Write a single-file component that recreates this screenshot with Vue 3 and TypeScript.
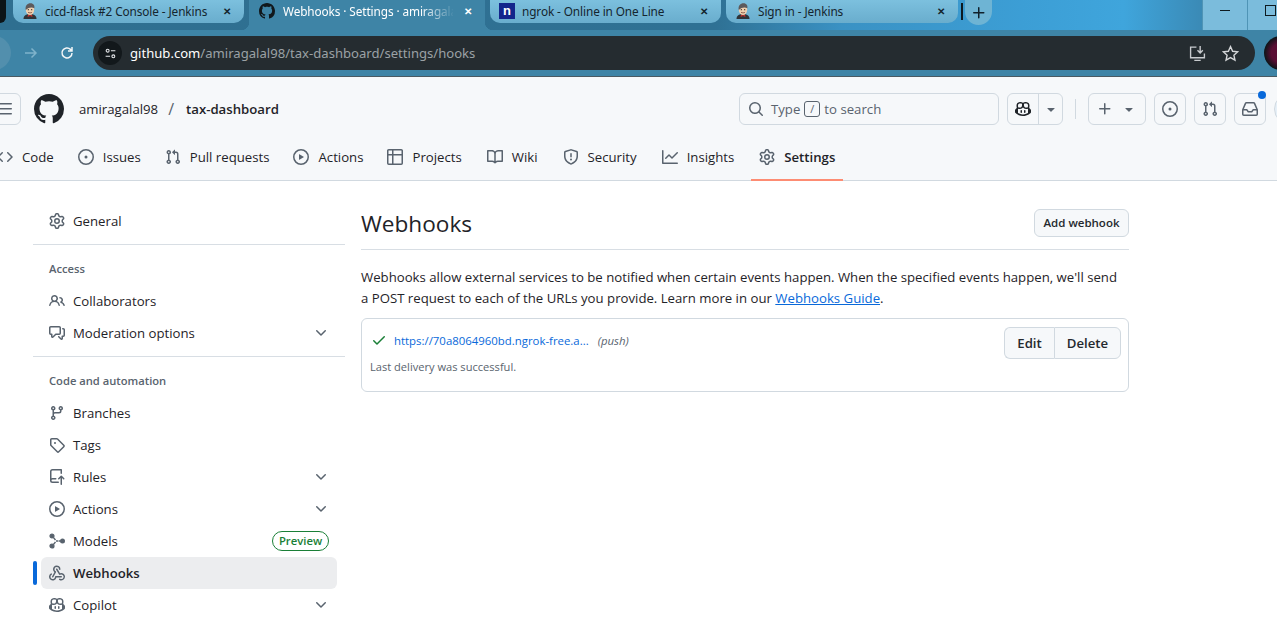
<script setup lang="ts">
const icons: Record<string, string[]> = {
  gear: ['M8 0a8.2 8.2 0 0 1 .701.031C9.444.095 9.99.645 10.16 1.29l.288 1.107c.018.066.079.158.212.224.231.114.454.243.668.386.123.082.233.09.299.071l1.103-.303c.644-.176 1.392.021 1.82.63.27.385.506.792.704 1.218.315.675.111 1.422-.364 1.891l-.814.806c-.049.048-.098.147-.088.294.016.257.016.515 0 .772-.01.147.038.246.088.294l.814.806c.475.469.679 1.216.364 1.891a7.977 7.977 0 0 1-.704 1.217c-.428.61-1.176.807-1.82.63l-1.102-.302c-.067-.019-.177-.011-.3.071a5.909 5.909 0 0 1-.668.386c-.133.066-.194.158-.211.224l-.29 1.106c-.168.646-.715 1.196-1.458 1.26a8.006 8.006 0 0 1-1.402 0c-.743-.064-1.289-.614-1.458-1.26l-.289-1.106c-.018-.066-.079-.158-.212-.224a5.738 5.738 0 0 1-.668-.386c-.123-.082-.233-.09-.299-.071l-1.103.303c-.644.176-1.392-.021-1.82-.63a8.12 8.12 0 0 1-.704-1.218c-.315-.675-.111-1.422.363-1.891l.815-.806c.05-.048.098-.147.088-.294a6.214 6.214 0 0 1 0-.772c.01-.147-.038-.246-.088-.294l-.815-.806C.635 6.045.431 5.298.746 4.623a7.92 7.92 0 0 1 .704-1.217c.428-.61 1.176-.807 1.82-.63l1.102.302c.067.019.177.011.3-.071.214-.143.437-.272.668-.386.133-.066.194-.158.211-.224l.29-1.106C6.009.645 6.556.095 7.299.03 7.53.01 7.764 0 8 0Zm-.571 1.525c-.036.003-.108.036-.137.146l-.289 1.105c-.147.561-.549.967-.998 1.189-.173.086-.34.183-.5.29-.417.278-.97.423-1.529.27l-1.103-.303c-.109-.03-.175.016-.195.045-.22.312-.412.644-.573.99-.014.031-.021.11.059.19l.815.806c.411.406.562.957.53 1.456a4.709 4.709 0 0 0 0 .582c.032.499-.119 1.05-.53 1.456l-.815.806c-.081.08-.073.159-.059.19.162.346.353.677.573.989.02.03.085.076.195.046l1.102-.303c.56-.153 1.113-.008 1.53.27.161.107.328.204.501.29.447.222.85.629.997 1.189l.289 1.105c.029.109.101.143.137.146a6.6 6.6 0 0 0 1.142 0c.036-.003.108-.036.137-.146l.289-1.105c.147-.561.549-.967.998-1.189.173-.086.34-.183.5-.29.417-.278.97-.423 1.529-.27l1.103.303c.109.029.175-.016.195-.045.22-.313.411-.644.573-.99.014-.031.021-.11-.059-.19l-.815-.806c-.411-.406-.562-.957-.53-1.456a4.709 4.709 0 0 0 0-.582c-.032-.499.119-1.05.53-1.456l.815-.806c.081-.08.073-.159.059-.19a6.464 6.464 0 0 0-.573-.989c-.02-.03-.085-.076-.195-.046l-1.102.303c-.56.153-1.113.008-1.53-.27a4.44 4.44 0 0 0-.501-.29c-.447-.222-.85-.629-.997-1.189l-.289-1.105c-.029-.11-.101-.143-.137-.146a6.6 6.6 0 0 0-1.142 0ZM11 8a3 3 0 1 1-6 0 3 3 0 0 1 6 0ZM9.5 8a1.5 1.5 0 1 0-3.001.001A1.5 1.5 0 0 0 9.5 8Z'],
  github: ['M8 0c4.42 0 8 3.58 8 8a8.013 8.013 0 0 1-5.45 7.59c-.4.08-.55-.17-.55-.38 0-.27.01-1.13.01-2.2 0-.75-.25-1.23-.54-1.48 1.78-.2 3.65-.88 3.65-3.95 0-.88-.31-1.59-.82-2.15.08-.2.36-1.02-.08-2.12 0 0-.67-.22-2.2.82-.64-.18-1.32-.27-2-.27-.68 0-1.36.09-2 .27-1.53-1.03-2.2-.82-2.2-.82-.44 1.1-.16 1.92-.08 2.12-.51.56-.82 1.28-.82 2.15 0 3.06 1.86 3.75 3.64 3.95-.23.2-.44.55-.51 1.07-.46.21-1.61.55-2.33-.66-.15-.24-.6-.83-1.23-.82-.67.01-.27.38.01.53.34.19.73.9.82 1.13.16.45.68 1.31 2.69.94 0 .67.01 1.3.01 1.49 0 .21-.15.45-.55.38A7.995 7.995 0 0 1 0 8c0-4.42 3.58-8 8-8Z'],
  code: ['m11.28 3.22 4.25 4.25a.75.75 0 0 1 0 1.06l-4.25 4.25a.749.749 0 0 1-1.275-.326.749.749 0 0 1 .215-.734L13.94 8l-3.72-3.72a.749.749 0 0 1 .326-1.275.749.749 0 0 1 .734.215Zm-6.56 0a.751.751 0 0 1 1.042.018.751.751 0 0 1 .018 1.042L2.06 8l3.72 3.72a.749.749 0 0 1-.326 1.275.749.749 0 0 1-.734-.215L.47 8.53a.75.75 0 0 1 0-1.06Z'],
  issue: ['M8 9.5a1.5 1.5 0 1 0 0-3 1.5 1.5 0 0 0 0 3Z', 'M8 0a8 8 0 1 1 0 16A8 8 0 0 1 8 0ZM1.5 8a6.5 6.5 0 1 0 13 0 6.5 6.5 0 0 0-13 0Z'],
  pr: ['M1.5 3.25a2.25 2.25 0 1 1 3 2.122v5.256a2.251 2.251 0 1 1-1.5 0V5.372A2.25 2.25 0 0 1 1.5 3.25Zm5.677-.177L9.573.677A.25.25 0 0 1 10 .854V2.5h1A2.5 2.5 0 0 1 13.5 5v5.628a2.251 2.251 0 1 1-1.5 0V5a1 1 0 0 0-1-1h-1v1.646a.25.25 0 0 1-.427.177L7.177 3.427a.25.25 0 0 1 0-.354ZM3.75 2.5a.75.75 0 1 0 0 1.5.75.75 0 0 0 0-1.5Zm0 9.5a.75.75 0 1 0 0 1.5.75.75 0 0 0 0-1.5Zm8.25.75a.75.75 0 1 0 1.5 0 .75.75 0 0 0-1.5 0Z'],
  play: ['M8 0a8 8 0 1 1 0 16A8 8 0 0 1 8 0ZM1.5 8a6.5 6.5 0 1 0 13 0 6.5 6.5 0 0 0-13 0Zm4.879-2.773 4.264 2.559a.25.25 0 0 1 0 .428l-4.264 2.559A.25.25 0 0 1 6 10.559V5.442a.25.25 0 0 1 .379-.215Z'],
  table: ['M0 1.75C0 .784.784 0 1.75 0h12.5C15.216 0 16 .784 16 1.75v12.5A1.75 1.75 0 0 1 14.25 16H1.75A1.75 1.75 0 0 1 0 14.25ZM6.5 6.5v8h7.75a.25.25 0 0 0 .25-.25V6.5Zm8-1.5V1.75a.25.25 0 0 0-.25-.25H6.5V5Zm-13 1.5v7.75c0 .138.112.25.25.25H5v-8ZM5 5V1.5H1.75a.25.25 0 0 0-.25.25V5Z'],
  book: ['M0 1.75A.75.75 0 0 1 .75 1h4.253c1.227 0 2.317.59 3 1.501A3.743 3.743 0 0 1 11.006 1h4.245a.75.75 0 0 1 .75.75v10.5a.75.75 0 0 1-.75.75h-4.507a2.25 2.25 0 0 0-1.591.659l-.622.621a.75.75 0 0 1-1.06 0l-.622-.621A2.25 2.25 0 0 0 5.258 13H.75a.75.75 0 0 1-.75-.75Zm7.251 10.324.004-5.073-.002-2.253A2.25 2.25 0 0 0 5.003 2.5H1.5v9h3.757a3.75 3.75 0 0 1 1.994.574ZM8.755 4.75l-.004 7.322a3.752 3.752 0 0 1 1.992-.572H14.5v-9h-3.495a2.25 2.25 0 0 0-2.25 2.25Z'],
  shield: ['M7.467.133a1.748 1.748 0 0 1 1.066 0l5.25 1.68A1.75 1.75 0 0 1 15 3.48V7c0 1.566-.32 3.182-1.303 4.682-.983 1.498-2.585 2.813-5.032 3.855a1.697 1.697 0 0 1-1.33 0c-2.447-1.042-4.049-2.357-5.032-3.855C1.32 10.182 1 8.566 1 7V3.48a1.75 1.75 0 0 1 1.217-1.667Zm.61 1.429a.25.25 0 0 0-.153 0l-5.25 1.68a.25.25 0 0 0-.174.238V7c0 1.358.275 2.666 1.057 3.86.784 1.194 2.121 2.34 4.366 3.297a.196.196 0 0 0 .154 0c2.245-.956 3.582-2.104 4.366-3.298C13.225 9.666 13.5 8.36 13.5 7V3.48a.251.251 0 0 0-.174-.237l-5.25-1.68ZM8.75 4.75v3a.75.75 0 0 1-1.5 0v-3a.75.75 0 0 1 1.5 0ZM9 10.5a1 1 0 1 1-2 0 1 1 0 0 1 2 0Z'],
  graph: ['M1.5 1.75V13.5h13.75a.75.75 0 0 1 0 1.5H.75a.75.75 0 0 1-.75-.75V1.75a.75.75 0 0 1 1.5 0Zm14.28 2.53-5.25 5.25a.75.75 0 0 1-1.06 0L7 7.06 4.28 9.78a.751.751 0 0 1-1.042-.018.751.751 0 0 1-.018-1.042l3.25-3.25a.75.75 0 0 1 1.06 0L10 7.94l4.72-4.72a.751.751 0 0 1 1.042.018.751.751 0 0 1 .018 1.042Z'],
  search: ['M10.68 11.74a6 6 0 0 1-7.922-8.982 6 6 0 0 1 8.982 7.922l3.04 3.04a.749.749 0 0 1-.326 1.275.749.749 0 0 1-.734-.215ZM11.5 7a4.499 4.499 0 1 0-8.997 0A4.499 4.499 0 0 0 11.5 7Z'],
  bars: ['M1 2.75A.75.75 0 0 1 1.75 2h12.5a.75.75 0 0 1 0 1.5H1.75A.75.75 0 0 1 1 2.75Zm0 5A.75.75 0 0 1 1.75 7h12.5a.75.75 0 0 1 0 1.5H1.75A.75.75 0 0 1 1 7.75ZM1.75 12h12.5a.75.75 0 0 1 0 1.5H1.75a.75.75 0 0 1 0-1.5Z'],
  copilot: ['M7.998 15.035c-4.562 0-7.873-2.914-7.998-3.749V9.338c.085-.628.677-1.686 1.588-2.065.013-.07.024-.143.036-.218.029-.183.06-.384.126-.612-.201-.508-.254-1.084-.254-1.656 0-.87.128-1.769.693-2.484.579-.733 1.494-1.124 2.724-1.261 1.206-.134 2.262.034 2.944.765.05.053.096.108.139.165.044-.057.094-.112.143-.165.682-.731 1.738-.899 2.944-.765 1.23.137 2.145.528 2.724 1.261.566.715.693 1.614.693 2.484 0 .572-.053 1.148-.254 1.656.066.228.098.429.126.612.012.076.024.148.037.218.924.385 1.522 1.471 1.591 2.095v1.872c0 .766-3.351 3.795-8.002 3.795Zm0-1.485c2.28 0 4.584-1.11 5.002-1.433V7.862l-.023-.116c-.49.21-1.075.291-1.727.291-1.146 0-2.059-.327-2.71-.991A3.222 3.222 0 0 1 8 6.303a3.24 3.24 0 0 1-.544.743c-.65.664-1.563.991-2.71.991-.652 0-1.236-.081-1.727-.291l-.023.116v4.255c.419.323 2.722 1.433 5.002 1.433ZM6.762 2.83c-.193-.206-.637-.413-1.682-.297-1.019.113-1.479.404-1.713.7-.247.312-.369.789-.369 1.554 0 .793.129 1.171.308 1.371.162.181.519.379 1.442.379.853 0 1.339-.235 1.638-.54.315-.322.527-.827.617-1.553.117-.935-.037-1.395-.241-1.614Zm4.155-.297c-1.044-.116-1.488.091-1.681.297-.204.219-.359.679-.242 1.614.091.726.303 1.231.618 1.553.299.305.784.54 1.638.54.922 0 1.28-.198 1.442-.379.179-.2.308-.578.308-1.371 0-.765-.123-1.242-.37-1.554-.233-.296-.693-.587-1.713-.7Z', 'M6.25 9.037a.75.75 0 0 1 .75.75v1.501a.75.75 0 0 1-1.5 0V9.787a.75.75 0 0 1 .75-.75Zm4.25.75v1.501a.75.75 0 0 1-1.5 0V9.787a.75.75 0 0 1 1.5 0Z'],
  plus: ['M7.75 2a.75.75 0 0 1 .75.75V7h4.25a.75.75 0 0 1 0 1.5H8.5v4.25a.75.75 0 0 1-1.5 0V8.5H2.75a.75.75 0 0 1 0-1.5H7V2.75A.75.75 0 0 1 7.75 2Z'],
  caret: ['m4.427 7.427 3.396 3.396a.25.25 0 0 0 .354 0l3.396-3.396A.25.25 0 0 0 11.396 7H4.604a.25.25 0 0 0-.177.427Z'],
  inbox: ['M2.8 2.06A1.75 1.75 0 0 1 4.41 1h7.18c.7 0 1.333.417 1.61 1.06l2.74 6.395c.04.093.06.194.06.295v4.5A1.75 1.75 0 0 1 14.25 15H1.75A1.75 1.75 0 0 1 0 13.25v-4.5c0-.101.02-.202.06-.295Zm1.61.44a.25.25 0 0 0-.23.152L1.887 8H4.75a.75.75 0 0 1 .6.3L6.625 10h2.75l1.275-1.7a.75.75 0 0 1 .6-.3h2.863L11.82 2.652a.25.25 0 0 0-.23-.152Zm10.09 7h-2.875l-1.275 1.7a.75.75 0 0 1-.6.3h-3.5a.75.75 0 0 1-.6-.3L4.375 9.5H1.5v3.75c0 .138.112.25.25.25h12.5a.25.25 0 0 0 .25-.25Z'],
  people: ['M2 5.5a3.5 3.5 0 1 1 5.898 2.549 5.508 5.508 0 0 1 3.034 4.084.75.75 0 1 1-1.482.235 4 4 0 0 0-7.9 0 .75.75 0 0 1-1.482-.236A5.507 5.507 0 0 1 3.102 8.05 3.493 3.493 0 0 1 2 5.5ZM11 4a3.001 3.001 0 0 1 2.22 5.018 5.01 5.01 0 0 1 2.56 3.012.749.749 0 0 1-.885.954.752.752 0 0 1-.549-.514 3.507 3.507 0 0 0-2.522-2.372.75.75 0 0 1-.574-.73v-.352a.75.75 0 0 1 .416-.672A1.5 1.5 0 0 0 11 5.5.75.75 0 0 1 11 4Zm-5.5-.5a2 2 0 1 0-.001 3.999A2 2 0 0 0 5.5 3.5Z'],
  discussion: ['M1.75 1h8.5c.966 0 1.75.784 1.75 1.75v5.5A1.75 1.75 0 0 1 10.25 10H7.061l-2.574 2.573A1.458 1.458 0 0 1 2 11.543V10h-.25A1.75 1.75 0 0 1 0 8.25v-5.5C0 1.784.784 1 1.75 1ZM1.5 2.75v5.5c0 .138.112.25.25.25h1a.75.75 0 0 1 .75.75v2.19l2.72-2.72a.749.749 0 0 1 .53-.22h3.5a.25.25 0 0 0 .25-.25v-5.5a.25.25 0 0 0-.25-.25h-8.5a.25.25 0 0 0-.25.25Zm13 2a.25.25 0 0 0-.25-.25h-.5a.75.75 0 0 1 0-1.5h.5c.966 0 1.75.784 1.75 1.75v5.5A1.75 1.75 0 0 1 14.25 12H14v1.543a1.458 1.458 0 0 1-2.487 1.03L9.22 12.28a.749.749 0 0 1 .326-1.275.749.749 0 0 1 .734.215l2.22 2.22v-2.19a.75.75 0 0 1 .75-.75h1a.25.25 0 0 0 .25-.25Z'],
  branch: ['M9.5 3.25a2.25 2.25 0 1 1 3 2.122V6A2.5 2.5 0 0 1 10 8.5H6a1 1 0 0 0-1 1v1.128a2.251 2.251 0 1 1-1.5 0V5.372a2.25 2.25 0 1 1 1.5 0v1.836A2.493 2.493 0 0 1 6 7h4a1 1 0 0 0 1-1v-.628A2.25 2.25 0 0 1 9.5 3.25Zm-6 0a.75.75 0 1 0 1.5 0 .75.75 0 0 0-1.5 0Zm8.25-.75a.75.75 0 1 0 0 1.5.75.75 0 0 0 0-1.5ZM4.25 12a.75.75 0 1 0 0 1.5.75.75 0 0 0 0-1.5Z'],
  tag: ['M1 7.775V2.75C1 1.784 1.784 1 2.75 1h5.025c.464 0 .91.184 1.238.513l6.25 6.25a1.75 1.75 0 0 1 0 2.474l-5.026 5.026a1.75 1.75 0 0 1-2.474 0l-6.25-6.25A1.75 1.75 0 0 1 1 7.775Zm1.5 0c0 .066.026.13.073.177l6.25 6.25a.25.25 0 0 0 .354 0l5.025-5.025a.25.25 0 0 0 0-.354l-6.25-6.25a.25.25 0 0 0-.177-.073H2.75a.25.25 0 0 0-.25.25ZM6 5a1 1 0 1 1 0 2 1 1 0 0 1 0-2Z'],
  rules: ['M1 2.5A2.5 2.5 0 0 1 3.5 0h8.75a.75.75 0 0 1 .75.75v3.5a.75.75 0 0 1-1.5 0V1.5h-8a1 1 0 0 0-1 1v6.708A2.493 2.493 0 0 1 3.5 9h3.25a.75.75 0 0 1 0 1.5H3.5a1 1 0 0 0 0 2h5.75a.75.75 0 0 1 0 1.5H3.5A2.5 2.5 0 0 1 1 11.5Zm13.23 7.79h-.001l-1.224-1.224v6.184a.75.75 0 0 1-1.5 0V9.066L10.28 10.29a.75.75 0 0 1-1.06-1.061l2.505-2.504a.75.75 0 0 1 1.06 0L15.29 9.23a.751.751 0 0 1-.018 1.042.751.751 0 0 1-1.042.018Z'],
  webhook: ['M5.5 4.25a2.25 2.25 0 0 1 4.5 0 .75.75 0 0 0 1.5 0 3.75 3.75 0 1 0-6.14 2.889l-2.272 4.258a.75.75 0 0 0 1.324.706L7 7.25a.75.75 0 0 0-.309-1.015A2.25 2.25 0 0 1 5.5 4.25Z', 'M7.364 3.607a.75.75 0 0 1 1.03.257l2.608 4.349a3.75 3.75 0 1 1-.628 6.785.75.75 0 0 1 .752-1.299 2.25 2.25 0 1 0-.033-3.88.75.75 0 0 1-1.03-.256L7.107 4.636a.75.75 0 0 1 .257-1.03Z', 'M2.9 8.776A.75.75 0 0 1 2.625 9.8 2.25 2.25 0 1 0 6 11.75a.75.75 0 0 1 .75-.751h5.5a.75.75 0 0 1 0 1.5H7.425a3.751 3.751 0 1 1-5.55-3.998.75.75 0 0 1 1.024.274Z'],
  check: ['M13.78 4.22a.75.75 0 0 1 0 1.06l-7.25 7.25a.75.75 0 0 1-1.06 0L2.22 9.28a.751.751 0 0 1 .018-1.042.751.751 0 0 1 1.042-.018L6 10.94l6.72-6.72a.75.75 0 0 1 1.06 0Z'],
  chevron: ['M12.78 5.22a.749.749 0 0 1 0 1.06l-4.25 4.25a.749.749 0 0 1-1.06 0L3.22 6.28a.749.749 0 1 1 1.06-1.06L8 8.939l3.72-3.719a.749.749 0 0 1 1.06 0Z'],
}

const tabs = [
  { title: 'cicd-flask #2 Console - Jenkins', fav: 'jenkins', w: 231 },
  { title: 'Webhooks · Settings · amiragala', fav: 'github', w: 236, active: true },
  { title: 'ngrok - Online in One Line', fav: 'ngrok', w: 231 },
  { title: 'Sign in - Jenkins', fav: 'jenkins', w: 232 },
]

const repoNav = [
  { label: 'Code', icon: 'code' },
  { label: 'Issues', icon: 'issue' },
  { label: 'Pull requests', icon: 'pr' },
  { label: 'Actions', icon: 'play' },
  { label: 'Projects', icon: 'table' },
  { label: 'Wiki', icon: 'book' },
  { label: 'Security', icon: 'shield' },
  { label: 'Insights', icon: 'graph' },
  { label: 'Settings', icon: 'gear', active: true },
]

const accessItems = [
  { label: 'Collaborators', icon: 'people' },
  { label: 'Moderation options', icon: 'discussion', more: true },
]

const codeItems = [
  { label: 'Branches', icon: 'branch' },
  { label: 'Tags', icon: 'tag' },
  { label: 'Rules', icon: 'rules', more: true },
  { label: 'Actions', icon: 'play', more: true },
  { label: 'Models', icon: 'models', preview: true },
  { label: 'Webhooks', icon: 'webhook', active: true },
  { label: 'Copilot', icon: 'copilot', more: true },
]
</script>

<template>
  <div class="window">
    <div class="tabstrip">
      <span class="edge"></span>
      <div
        v-for="tab in tabs"
        :key="tab.title"
        :class="['tab', { active: tab.active }]"
        :style="{ width: tab.w + 'px' }"
      >
        <svg v-if="tab.fav === 'jenkins'" class="fav" viewBox="0 0 16 16">
          <path d="M1.500 16c0-3.500 2.500-5 6.500-5s6.500 1.500 6.500 5Z" fill="#2f3438" />
          <path d="M6 11.500 8 12.500 10 11.500 10.500 14 8 13 5.500 14Z" fill="#c4302b" />
          <ellipse cx="8" cy="6.500" rx="4.200" ry="5.500" fill="#eecfae" />
          <path d="M3.700 7C3 2.500 5.500.3 8.500.3s4.500 2.500 3.800 5C10.500 3.800 6.500 4 3.700 7Z" fill="#5c5a5c" />
          <path d="M6 9.300c1.200.8 3 .7 4 0" stroke="#7a4a3a" stroke-width=".8" fill="none" />
          <circle cx="6.300" cy="6.700" r=".6" fill="#222" />
          <circle cx="9.700" cy="6.700" r=".6" fill="#222" />
        </svg>
        <svg v-else-if="tab.fav === 'github'" class="fav" viewBox="0 0 16 16">
          <path v-for="d in icons.github" :key="d" :d="d" fill="#11181c" />
        </svg>
        <span v-else class="fav ngrok">n</span>
        <span class="tab-title">{{ tab.title }}</span>
        <span class="tab-close">✕</span>
      </div>
      <span class="tab-sep"></span>
      <span class="new-tab">
        <svg viewBox="0 0 16 16"><path v-for="d in icons.plus" :key="d" :d="d" /></svg>
      </span>
      <div class="win-btns">
        <span class="win-btn"><i class="min"></i></span>
        <span class="win-btn"><i class="max"></i></span>
      </div>
    </div>

    <div class="toolbar">
      <span class="back"></span>
      <svg class="tb-icon forward" viewBox="0 0 16 16">
        <path d="M2 8h11M8.500 3.500 13 8l-4.500 4.500" fill="none" stroke="#7fb3cb" stroke-width="1.500" />
      </svg>
      <svg class="tb-icon reload" viewBox="0 0 16 16">
        <path d="M13 8a5 5 0 1 1-1.500-3.600L13 6M13 2v4H9" fill="none" stroke="#f3f6f7" stroke-width="1.500" />
      </svg>
      <div class="omnibox">
        <span class="site-btn">
          <svg viewBox="0 0 16 16" fill="none" stroke="#e8eaed" stroke-width="1.300">
            <circle cx="4.500" cy="4.500" r="1.800" />
            <path d="M8.500 4.500H14M2 11.500h5.500" />
            <circle cx="11.500" cy="11.500" r="1.800" />
          </svg>
        </span>
        <span class="url"><b>github.com</b>/amiragalal98/tax-dashboard/settings/hooks</span>
        <svg class="omni-icon" viewBox="0 0 16 16" fill="none" stroke="#c9cccf" stroke-width="1.300">
          <path d="M7 2H1.500v10h13V8M5 14.500h6M10.500 1v6M8 5l2.500 2.500L13 5" />
        </svg>
        <svg class="omni-icon" viewBox="0 0 16 16" fill="none" stroke="#d5d7d9" stroke-width="1.300">
          <path d="m8 1.500 2 4.400 4.800.5-3.600 3.200 1 4.700L8 11.900l-4.200 2.400 1-4.700L1.200 6.400 6 5.900Z" />
        </svg>
      </div>
      <span class="avatar"></span>
    </div>

    <header class="gh-header">
      <div class="gh-top">
        <span class="icon-btn burger">
          <svg class="oi" viewBox="0 0 16 16"><path v-for="d in icons.bars" :key="d" :d="d" /></svg>
        </span>
        <svg class="logo" viewBox="0 0 16 16"><path v-for="d in icons.github" :key="d" :d="d" /></svg>
        <span class="owner">amiragalal98</span>
        <span class="slash">/</span>
        <strong class="repo">tax-dashboard</strong>
        <span class="spacer"></span>
        <div class="search">
          <svg class="oi" viewBox="0 0 16 16"><path v-for="d in icons.search" :key="d" :d="d" /></svg>
          <span>Type</span><kbd>/</kbd><span>to search</span>
        </div>
        <div class="split copilot-btn">
          <span class="split-main">
            <svg class="oi" viewBox="0 0 16 16"><path v-for="d in icons.copilot" :key="d" :d="d" /></svg>
          </span>
          <span class="split-caret">
            <svg class="oi" viewBox="0 0 16 16"><path v-for="d in icons.caret" :key="d" :d="d" /></svg>
          </span>
        </div>
        <span class="v-sep"></span>
        <div class="icon-btn plus-btn">
          <svg class="oi" viewBox="0 0 16 16"><path v-for="d in icons.plus" :key="d" :d="d" /></svg>
          <svg class="oi" viewBox="0 0 16 16"><path v-for="d in icons.caret" :key="d" :d="d" /></svg>
        </div>
        <span class="icon-btn square">
          <svg class="oi" viewBox="0 0 16 16"><path v-for="d in icons.issue" :key="d" :d="d" /></svg>
        </span>
        <span class="icon-btn square">
          <svg class="oi" viewBox="0 0 16 16"><path v-for="d in icons.pr" :key="d" :d="d" /></svg>
        </span>
        <span class="icon-btn square">
          <svg class="oi" viewBox="0 0 16 16"><path v-for="d in icons.inbox" :key="d" :d="d" /></svg>
          <i class="dot"></i>
        </span>
        <span class="user-avatar"></span>
      </div>
      <nav class="repo-nav">
        <a v-for="item in repoNav" :key="item.label" :class="['nav-item', { active: item.active }]">
          <svg class="oi" viewBox="0 0 16 16"><path v-for="d in icons[item.icon]" :key="d" :d="d" /></svg>
          <span>{{ item.label }}</span>
        </a>
      </nav>
    </header>

    <div class="page">
      <aside class="sidebar">
        <a class="side-item">
          <svg class="oi" viewBox="0 0 16 16"><path v-for="d in icons.gear" :key="d" :d="d" /></svg>
          <span class="side-label">General</span>
        </a>
        <div class="side-div"></div>
        <h3 class="side-head">Access</h3>
        <a v-for="item in accessItems" :key="item.label" class="side-item">
          <svg class="oi" viewBox="0 0 16 16"><path v-for="d in icons[item.icon]" :key="d" :d="d" /></svg>
          <span class="side-label">{{ item.label }}</span>
          <svg v-if="item.more" class="oi chev" viewBox="0 0 16 16"><path v-for="d in icons.chevron" :key="d" :d="d" /></svg>
        </a>
        <div class="side-div"></div>
        <h3 class="side-head">Code and automation</h3>
        <a v-for="item in codeItems" :key="item.label" :class="['side-item', { active: item.active }]">
          <svg v-if="item.icon === 'models'" class="oi" viewBox="0 0 16 16" fill="none" stroke="currentColor" stroke-width="1.400">
            <circle cx="3" cy="3" r="1.900" />
            <circle cx="3" cy="13" r="1.900" />
            <circle cx="13.500" cy="8" r="1.800" />
            <circle cx="8" cy="8" r="1" fill="currentColor" stroke="none" />
            <path d="M4.300 4.400 6.500 7M4.300 11.600 6.500 9M9.500 8h2" />
          </svg>
          <svg v-else class="oi" viewBox="0 0 16 16"><path v-for="d in icons[item.icon]" :key="d" :d="d" /></svg>
          <span class="side-label">{{ item.label }}</span>
          <span v-if="item.preview" class="preview">Preview</span>
          <svg v-if="item.more" class="oi chev" viewBox="0 0 16 16"><path v-for="d in icons.chevron" :key="d" :d="d" /></svg>
        </a>
      </aside>

      <main class="content">
        <div class="title-row">
          <h1>Webhooks</h1>
          <button class="btn small" type="button">Add webhook</button>
        </div>
        <p class="intro">
          Webhooks allow external services to be notified when certain events happen. When the specified events happen, we'll send
          a POST request to each of the URLs you provide. Learn more in our <a href="#">Webhooks Guide</a>.
        </p>
        <div class="hook-box">
          <div class="hook-info">
            <div class="hook-line">
              <svg class="oi ok" viewBox="0 0 16 16"><path v-for="d in icons.check" :key="d" :d="d" /></svg>
              <a class="hook-url">https://70a8064960bd.ngrok-free.a...</a>
              <em>(push)</em>
            </div>
            <div class="hook-status">Last delivery was successful.</div>
          </div>
          <div class="btn-group">
            <button class="btn" type="button">Edit</button>
            <button class="btn" type="button">Delete</button>
          </div>
        </div>
      </main>
    </div>
  </div>
</template>

<style>
html, body { margin: 0; background: #fff; overflow: hidden; }
</style>

<style scoped>
.window {
  width: 1277px;
  height: 622px;
  overflow: hidden;
  display: flex;
  flex-direction: column;
  font-family: "Open Sans", "Noto Sans", sans-serif;
  color: #1f2328;
  font-size: 13.2px;
}
.oi { width: 16px; height: 16px; fill: currentColor; flex-shrink: 0; display: block; }

/* browser chrome */
.tabstrip {
  height: 30px;
  flex-shrink: 0;
  display: flex;
  align-items: flex-start;
  background: linear-gradient(90deg, #2f6f90 0, #2f7194 56%, #3a92c4 66%, #3c9ed5 80%, #3fa5dc 88%, #3a86b0 95%);
  font-family: "Noto Sans", sans-serif;
}
.edge { width: 6px; height: 23px; background: #0c1417; border-radius: 0 0 6px 0; margin-right: 7px; flex-shrink: 0; }
.tab {
  height: 23px;
  display: flex;
  align-items: center;
  gap: 7px;
  padding: 0 10px 1px 9px;
  box-sizing: border-box;
  background: linear-gradient(180deg, #7cc0de, #69adcd);
  border-radius: 0 0 10px 10px;
  margin-right: 5px;
  font-size: 11.8px;
  color: #14252e;
  flex-shrink: 0;
  position: relative;
}
.tab.active { height: 30px; background: #3e84a6; color: #fff; padding: 0 10px 8px 10px; gap: 8px; border-radius: 0; }
.tab.active::before, .tab.active::after {
  content: "";
  position: absolute;
  bottom: 0;
  width: 8px;
  height: 8px;
}
.tab.active::before { left: -8px; background: radial-gradient(circle at 0 0, transparent 8px, #3e84a6 8.5px); }
.tab.active::after { right: -8px; background: radial-gradient(circle at 100% 0, transparent 8px, #3e84a6 8.5px); }
.fav { width: 16px; height: 16px; flex-shrink: 0; }
.ngrok {
  background: #13258c;
  color: #fff;
  font: 700 13px/15px "Liberation Sans", sans-serif;
  text-align: center;
}
.tab-title { flex: 1; white-space: nowrap; overflow: hidden; letter-spacing: -.1px; }
.tab.active .tab-title { -webkit-mask-image: linear-gradient(90deg, #000 0, #000 138px, transparent 172px); mask-image: linear-gradient(90deg, #000 0, #000 138px, transparent 172px); }
.tab-close { font-size: 10px; font-weight: 700; width: 14px; text-align: center; }
.tab-sep { width: 2px; height: 17px; background: #0e1a20; margin: 3px 2px 0 -2px; flex-shrink: 0; }
.new-tab {
  width: 27px;
  height: 25px;
  border-radius: 0 0 14px 14px;
  background: #6eb4d4;
  display: flex;
  align-items: center;
  justify-content: center;
  flex-shrink: 0;
}
.new-tab svg { width: 16px; height: 16px; fill: #10202a; }
.win-btns { margin-left: auto; display: flex; margin-right: -15px; }
.win-btn {
  width: 45px;
  height: 30px;
  box-sizing: border-box;
  padding-bottom: 10px;
  display: flex;
  align-items: center;
  justify-content: center;
  background: #7bbcdc;
  border-left: 1px solid #4f94b6;
}
.win-btn i { display: block; }
.win-btn .min { width: 10px; height: 1px; background: #0d1a20; }
.win-btn .max { width: 9px; height: 9px; border: 1px solid #0d1a20; }

.toolbar {
  height: 46px;
  flex-shrink: 0;
  display: flex;
  align-items: center;
  background: #3e84a6;
  border-bottom: 1px solid #4a5a62;
}
.back { width: 22px; height: 34px; border-radius: 0 17px 17px 0; background: #528fad; margin-left: -11px; flex-shrink: 0; }
.tb-icon { width: 16px; height: 16px; flex-shrink: 0; }
.forward { margin-left: 12px; }
.reload { margin-left: 20px; }
.omnibox {
  width: 1162px;
  height: 34px;
  flex-shrink: 0;
  margin-left: 18px;
  background: #252c30;
  border-radius: 17px;
  display: flex;
  align-items: center;
  font-family: "Noto Sans", sans-serif;
  font-size: 13.1px;
}
.site-btn {
  width: 24px;
  height: 24px;
  border-radius: 50%;
  background: #12181b;
  margin-left: 5px;
  display: flex;
  align-items: center;
  justify-content: center;
}
.site-btn svg { width: 13px; height: 13px; }
.url { margin-left: 8px; color: #9ba1a5; flex: 1; }
.url b { color: #fff; font-weight: 400; }
.omni-icon { width: 17px; height: 17px; margin-right: 16px; flex-shrink: 0; }
.avatar { width: 34px; height: 34px; border-radius: 50%; background: radial-gradient(circle, #5a0f34 40%, #0d1518 70%); margin-left: 9px; flex-shrink: 0; }

/* github header */
.gh-header {
  height: 104px;
  flex-shrink: 0;
  box-sizing: border-box;
  background: #f6f8fa;
  border-bottom: 1px solid #d1d9e0;
  display: flex;
  flex-direction: column;
}
.gh-top { display: flex; align-items: center; height: 32px; margin-top: 16px; }
.icon-btn {
  height: 32px;
  box-sizing: border-box;
  border: 1px solid #d1d9e0;
  border-radius: 6px;
  display: flex;
  align-items: center;
  justify-content: center;
  color: #59636e;
  flex-shrink: 0;
}
.burger { width: 32px; margin-left: -11px; }
.logo { width: 30px; height: 30px; margin-left: 13px; fill: #1f2328; flex-shrink: 0; }
.owner { margin-left: 15px; }
.slash { margin: 0 12px 0 10px; color: #59636e; font-size: 16px; }
.repo { font-weight: 600; }
.spacer { flex: 1; }
.search {
  width: 260px;
  height: 32px;
  box-sizing: border-box;
  border: 1px solid #d1d9e0;
  border-radius: 6px;
  display: flex;
  align-items: center;
  padding-left: 8px;
  color: #59636e;
  flex-shrink: 0;
}
.search .oi { margin-right: 7px; }
kbd {
  width: 16px;
  height: 16px;
  box-sizing: border-box;
  border: 1px solid #59636e;
  border-radius: 3px;
  margin: 0 4px;
  font: 11px/14px "Open Sans", sans-serif;
  text-align: center;
}
.split {
  margin-left: 8px;
  width: 56px;
  height: 32px;
  box-sizing: border-box;
  border: 1px solid #d1d9e0;
  border-radius: 6px;
  display: flex;
  color: #59636e;
  flex-shrink: 0;
}
.split-main { width: 30px; display: flex; align-items: center; justify-content: center; border-right: 1px solid #d1d9e0; color: #1f2328; }
.split-caret { flex: 1; display: flex; align-items: center; justify-content: center; }
.v-sep { width: 1px; height: 20px; background: #d1d9e0; margin: 0 12px; flex-shrink: 0; }
.plus-btn { width: 58px; gap: 8px; }
.square { width: 32px; margin-left: 8px; position: relative; }
.dot {
  position: absolute;
  top: -3px;
  right: -1px;
  width: 8px;
  height: 8px;
  border-radius: 50%;
  background: #0969da;
}
.user-avatar {
  width: 32px;
  height: 32px;
  box-sizing: border-box;
  border-radius: 50%;
  border: 1px solid #d1d9e0;
  background: #e6f0f8;
  margin-left: 8px;
  margin-right: -29px;
  flex-shrink: 0;
}

.repo-nav { display: flex; gap: 8px; margin-top: 16px; margin-left: -11px; flex: 1; }
.nav-item {
  display: flex;
  align-items: center;
  gap: 9px;
  padding: 0 8px;
  height: 32px;
  position: relative;
  color: #1f2328;
}
.nav-item:nth-child(n+6) { margin-left: 1px; }
.nav-item .oi { color: #59636e; }
.nav-item.active { font-weight: 600; }
.nav-item.active::after {
  content: "";
  position: absolute;
  left: 0;
  right: 0;
  bottom: -8px;
  height: 2px;
  background: #fd8c73;
}

/* settings page */
.page { display: flex; flex: 1; min-height: 0; padding-top: 24px; }
.sidebar { width: 312px; margin-left: 33px; flex-shrink: 0; display: flex; flex-direction: column; }
.side-item {
  height: 32px;
  flex-shrink: 0;
  margin: 0 8px;
  padding: 0 8px;
  border-radius: 6px;
  display: flex;
  align-items: center;
  position: relative;
}
.side-item > .oi:first-child { color: #59636e; margin-right: 8px; }
.side-label { flex: 1; }
.side-item.active { background: #ecedef; font-weight: 600; }
.side-item.active::before {
  content: "";
  position: absolute;
  left: -8px;
  top: 4px;
  bottom: 4px;
  width: 4px;
  border-radius: 2px;
  background: #0969da;
}
.chev { color: #59636e; }
.preview {
  width: 57px;
  height: 20px;
  box-sizing: border-box;
  border: 1px solid #1a7f37;
  border-radius: 10px;
  color: #1a7f37;
  font-size: 11.3px;
  font-weight: 600;
  line-height: 18px;
  text-align: center;
}
.side-div { height: 1px; background: #d8dee4; margin: 7px 0 8px; flex-shrink: 0; }
.side-head {
  margin: 0;
  padding: 7px 16px;
  height: 32px;
  box-sizing: border-box;
  font-size: 11.2px;
  font-weight: 600;
  line-height: 18px;
  color: #59636e;
  flex-shrink: 0;
}
.content { width: 768px; margin-left: 16px; flex-shrink: 0; }
.title-row {
  display: flex;
  align-items: center;
  justify-content: space-between;
  height: 43px;
  box-sizing: border-box;
  padding-bottom: 11px;
  margin-top: 2px;
  border-bottom: 1px solid #d8dee4;
}
h1 { margin: 0; padding-top: 2px; font-size: 22.6px; font-weight: 400; line-height: 30px; }
.btn {
  font: 600 13.2px "Open Sans", sans-serif;
  color: #25292e;
  background: #f6f8fa;
  border: 1px solid #d1d9e0;
  border-radius: 6px;
  height: 32px;
  padding: 0 12px;
}
.btn.small { font-size: 11.5px; height: 28px; width: 95px; padding: 0; }
.intro { margin: 17px 0 0; line-height: 21px; max-width: 762px; }
.intro a { color: #0969da; text-decoration: underline; }
.hook-box {
  margin-top: 9px;
  height: 74px;
  box-sizing: border-box;
  border: 1px solid #d1d9e0;
  border-radius: 6px;
  padding: 8px 7px 0 8px;
  display: flex;
  justify-content: space-between;
  align-items: flex-start;
}
.hook-info { font-size: 11.4px; }
.hook-line { display: flex; align-items: center; height: 26px; }
.ok { color: #1a7f37; margin-right: 7px; margin-left: 1px; }
.hook-url { color: #0969da; }
.hook-line em { margin-left: 9px; color: #59636e; }
.hook-status { color: #59636e; margin-top: 5px; line-height: 18px; font-size: 11.1px; }
.btn-group { display: flex; }
.btn-group .btn:first-child { width: 50px; padding: 0; border-radius: 6px 0 0 6px; border-right: 0; }
.btn-group .btn:last-child { width: 67px; padding: 0; border-radius: 0 6px 6px 0; }
</style>
